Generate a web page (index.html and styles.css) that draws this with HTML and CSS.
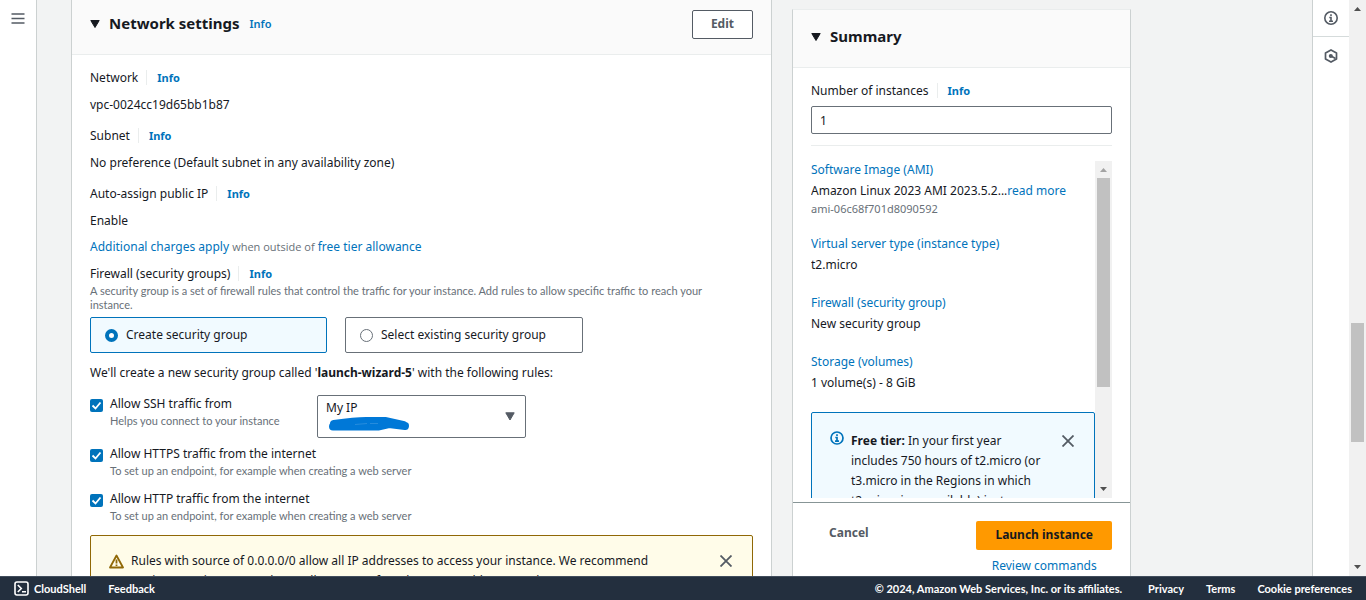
FILE: index.html
```html
<!DOCTYPE html>
<html lang="en">
<head>
<meta charset="utf-8">
<title>Launch an instance | EC2</title>
<link rel="stylesheet" href="styles.css">
</head>
<body>
<div class="app">
  <nav class="rail rail-left">
    <button class="icon-btn" aria-label="Open navigation">
      <svg width="14" height="14" viewBox="0 0 14 14" fill="none" stroke="#545b64" stroke-width="1.600"><path d="M0.500 2h13M0.500 6.500h13M0.500 11h13"/></svg>
    </button>
  </nav>
  <main class="content">
    <section class="card settings">
      <header class="card-head">
        <svg class="caret" width="10" height="8" viewBox="0 0 10 8"><path d="M0.800 0.500h8.400L5 7.500z" fill="#16191f" stroke="#16191f" stroke-linejoin="round"/></svg>
        <h2>Network settings</h2>
        <a class="info" href="#">Info</a>
        <button class="btn btn-edit">Edit</button>
      </header>
      <div class="settings-body">
        <dl class="facts">
          <dt>Network<a class="info ruled" href="#">Info</a></dt>
          <dd>vpc-0024cc19d65bb1b87</dd>
          <dt>Subnet<a class="info ruled" href="#">Info</a></dt>
          <dd>No preference (Default subnet in any availability zone)</dd>
          <dt>Auto-assign public IP<a class="info ruled" href="#">Info</a></dt>
          <dd>Enable</dd>
        </dl>
        <p class="charges"><a href="#">Additional charges apply</a> <small>when outside of</small> <a href="#">free tier allowance</a></p>
        <div class="group-label">Firewall (security groups)<a class="info ruled" href="#">Info</a></div>
        <p class="hint firewall-hint">A security group is a set of firewall rules that control the traffic for your instance. Add rules to allow specific traffic to reach your instance.</p>
        <div class="tiles">
          <label class="tile selected"><input class="radio" type="radio" name="sg" checked>Create security group</label>
          <label class="tile"><input class="radio" type="radio" name="sg">Select existing security group</label>
        </div>
        <p class="group-note">We'll create a new security group called '<b>launch-wizard-5</b>' with the following rules:</p>
        <div class="rules">
          <div class="ssh-row">
            <div class="rule">
              <input class="check" type="checkbox" id="ssh" checked>
              <div><label for="ssh">Allow SSH traffic from</label><p class="hint">Helps you connect to your instance</p></div>
            </div>
            <div class="source">
              <select aria-label="SSH source"><option>My IP</option></select>
              <svg class="scribble" width="84" height="15" viewBox="0 0 84 15"><path d="M7 7Q28 4 39 4H58L76 8" fill="none" stroke="#0078d7" stroke-width="8" stroke-linecap="round" stroke-linejoin="round"/><path d="M6 9.500H51L62 7L78 9" fill="none" stroke="#0078d7" stroke-width="8" stroke-linecap="round" stroke-linejoin="round"/><path d="M28 7.500l12-1M43 6.500h8" stroke="#4da0e3" stroke-width="0.500"/></svg>
              <svg class="source-caret" width="10" height="9" viewBox="0 0 10 9"><path d="M0.800 0.800h8.400L5 8z" fill="#545b64" stroke="#545b64" stroke-linejoin="round"/></svg>
            </div>
          </div>
          <div class="rule">
            <input class="check" type="checkbox" id="https" checked>
            <div><label for="https">Allow HTTPS traffic from the internet</label><p class="hint">To set up an endpoint, for example when creating a web server</p></div>
          </div>
          <div class="rule">
            <input class="check" type="checkbox" id="http" checked>
            <div><label for="http">Allow HTTP traffic from the internet</label><p class="hint">To set up an endpoint, for example when creating a web server</p></div>
          </div>
        </div>
        <div class="alert warning">
          <svg class="alert-icon" width="15" height="15" viewBox="0 0 15 15" fill="none" stroke="#906806" stroke-width="1.800"><path d="M7.500 1.500L14 13.500H1z" stroke-linejoin="round"/><path d="M7.500 5.500v4M7.500 10.500v1.500"/></svg>
          <p>Rules with source of 0.0.0.0/0 allow all IP addresses to access your instance. We recommend setting security group rules to allow access from known IP addresses only.</p>
          <button class="icon-btn close" aria-label="Dismiss"><svg width="12" height="12" viewBox="0 0 12 12" stroke="#545b64" stroke-width="1.800"><path d="M0.500 0.500l11 11M11.500 0.500l-11 11"/></svg></button>
        </div>
      </div>
    </section>
    <aside class="card summary">
      <header class="card-head">
        <svg class="caret" width="10" height="8" viewBox="0 0 10 8"><path d="M0.800 0.500h8.400L5 7.500z" fill="#16191f" stroke="#16191f" stroke-linejoin="round"/></svg>
        <h2>Summary</h2>
      </header>
      <div class="count">
        <div class="group-label"><label for="count">Number of instances</label><a class="info ruled" href="#">Info</a></div>
        <input class="count-input" id="count" type="text" value="1">
      </div>
      <div class="scroller">
        <div class="scroll-content">
          <div class="item"><a href="#">Software Image (AMI)</a><p>Amazon Linux 2023 AMI 2023.5.2...<a href="#">read more</a></p><p class="ami-id">ami-06c68f701d8090592</p></div>
          <div class="item"><a href="#">Virtual server type (instance type)</a><p>t2.micro</p></div>
          <div class="item"><a href="#">Firewall (security group)</a><p>New security group</p></div>
          <div class="item"><a href="#">Storage (volumes)</a><p>1 volume(s) - 8 GiB</p></div>
          <div class="alert free">
            <svg class="alert-icon" width="14" height="14" viewBox="0 0 14 14" fill="none" stroke="#0073bb" stroke-width="1.700"><circle cx="7" cy="7" r="6"/><path d="M7 3.300v1.700M5.300 6.500h1.700v3.500M5 10.200h4"/></svg>
            <p><b>Free tier:</b> In your first year includes 750 hours of t2.micro (or t3.micro in the Regions in which t2.micro is unavailable) instance usage</p>
            <button class="icon-btn close" aria-label="Dismiss"><svg width="12" height="12" viewBox="0 0 12 12" stroke="#545b64" stroke-width="1.800"><path d="M0.500 0.500l11 11M11.500 0.500l-11 11"/></svg></button>
          </div>
        </div>
        <div class="bar">
          <svg width="7" height="4" viewBox="0 0 7 4"><path d="M0 4L3.500 0L7 4z" fill="#a3a3a3"/></svg>
          <div class="track"><div class="thumb"></div></div>
          <svg width="7" height="4" viewBox="0 0 7 4"><path d="M0 0L3.500 4L7 0z" fill="#505050"/></svg>
        </div>
      </div>
      <footer class="actions">
        <button class="btn-link">Cancel</button>
        <div class="launch"><button class="btn-primary">Launch instance</button><a href="#">Review commands</a></div>
      </footer>
    </aside>
  </main>
  <aside class="rail rail-right">
    <button class="icon-btn" aria-label="Info panel"><svg width="14" height="14" viewBox="0 0 14 14" fill="none" stroke="#545b64" stroke-width="1.600"><circle cx="7" cy="7" r="6.200"/><path d="M7 3.300v1.700M5.300 6.500h1.700v3.500M5 10.200h4"/></svg></button>
    <button class="icon-btn" aria-label="Tutorials"><svg width="14" height="14" viewBox="0 0 14 14" fill="none" stroke="#545b64" stroke-width="1.700"><path d="M7 0.900l5.500 3v6.200L7 13.100L1.500 10.100V3.900z" stroke-linejoin="round"/><circle cx="6.800" cy="7" r="1.200" fill="#545b64"/><path d="M7 7l4.500 2.500"/></svg></button>
  </aside>
  <div class="bar page-bar">
    <svg width="7" height="4" viewBox="0 0 7 4"><path d="M0 4L3.500 0L7 4z" fill="#505050"/></svg>
    <div class="track"><div class="thumb"></div></div>
    <svg width="7" height="4" viewBox="0 0 7 4"><path d="M0 0L3.500 4L7 0z" fill="#505050"/></svg>
  </div>
</div>
<footer class="console-footer">
  <a class="shell" href="#"><svg width="15" height="15" viewBox="0 0 15 15" fill="none" stroke="#fff" stroke-width="1.600"><rect x="1" y="1" width="13" height="13" rx="2"/><path d="M3.800 4l3.500 3.500L3.800 11M8 10.800h4"/></svg>CloudShell</a>
  <a href="#">Feedback</a>
  <span class="copyright">© 2024, Amazon Web Services, Inc. or its affiliates.</span>
  <a href="#">Privacy</a>
  <a href="#">Terms</a>
  <a href="#">Cookie preferences</a>
</footer>
</body>
</html>
```
FILE: styles.css
```css
* { box-sizing: border-box; }
body {
  margin: 0;
  height: 100vh;
  display: flex;
  flex-direction: column;
  overflow: hidden;
  background: #f2f3f3;
  color: #16191f;
  font: 12px/20px "Noto Sans", "Open Sans", sans-serif;
}
p, h2, dl, dd { margin: 0; }
a { color: #0073bb; text-decoration: none; }
button, input, select { font: inherit; color: inherit; }
b { font-weight: 700; }

.app { flex: 1; min-height: 0; display: flex; }
.content {
  flex: 1;
  min-width: 0;
  display: grid;
  grid-template-columns: 701fr 339fr;
  grid-template-rows: minmax(0, 1fr);
  gap: 20px;
  padding: 0 181px 0 34px;
  overflow: hidden;
}

.rail { flex: none; width: 37px; background: #fff; display: flex; flex-direction: column; }
.rail-left { border-right: 1px solid #ccd1d1; }
.rail-right { border-left: 1px solid #ccd1d1; }
.icon-btn {
  display: flex;
  align-items: center;
  justify-content: center;
  border: 0;
  padding: 0;
  background: none;
}
.rail .icon-btn { height: 37px; }
.rail-right .icon-btn:first-child { border-bottom: 1px solid #d5dbdb; }

.card { background: #fff; border: 1px solid #ccd1d1; border-width: 0 1px; min-width: 0; }
.card-head {
  display: flex;
  align-items: center;
  height: 55px;
  padding: 0 18px 6px;
  background: #fafafa;
  border-bottom: 1px solid #eaeded;
}
.card-head h2 { font-size: 15px; line-height: 20px; font-weight: 700; margin: 0 10px 2px 9px; }
.info { font-size: 11px; font-weight: 700; }
.card-head .info { font-weight: 600; }
.ruled { margin-left: 8px; padding: 0 0 0 10px; border-left: 1px solid #eaeded; line-height: 14px; }
.btn {
  height: 29px;
  padding: 0 18px;
  border: 1px solid #545b64;
  border-radius: 2px;
  background: #fff;
  color: #545b64;
  font-weight: 700;
  line-height: 20px;
}
.btn-edit { margin-left: auto; }

.settings-body { padding: 13px 18px; }
.facts dt { margin-bottom: 7px; }
.facts dd { margin-bottom: 11px; }
.facts dd:last-child { margin-bottom: 6px; }
.charges { margin-bottom: 7px; color: #687078; }
.charges small { font: 11px "Open Sans", sans-serif; }
.hint { font: 11px/14px Lato, "Open Sans", sans-serif; color: #687078; }
.firewall-hint { margin-bottom: 5px; padding-right: 20px; }
.tiles { display: grid; grid-template-columns: 237px 238px; gap: 18px; margin-bottom: 10px; }
.tile {
  display: flex;
  align-items: center;
  gap: 8px;
  height: 36px;
  padding: 0 14px;
  border: 1px solid #687078;
  border-radius: 2px;
}
.tile.selected { border-color: #0073bb; background: #f1faff; }
.radio {
  appearance: none;
  width: 13px;
  height: 13px;
  margin: 0;
  border: 1px solid #687078;
  border-radius: 50%;
  background: #fff;
}
.radio:checked { border: 4px solid #0073bb; }
.group-note { margin-bottom: 11px; }
.rules { display: flex; flex-direction: column; gap: 11px; margin-bottom: 12px; }
.rule { display: flex; gap: 7px; align-items: flex-start; }
.rule label { display: block; }
.check {
  appearance: none;
  flex: none;
  width: 13px;
  height: 13px;
  margin: 5px 0 0;
  border-radius: 2px;
  background: #0073bb url("data:image/svg+xml,%3Csvg xmlns='http://www.w3.org/2000/svg' viewBox='0 0 13 13'%3E%3Cpath d='M2.500 6.500L5.500 9.500L10.500 3.500' fill='none' stroke='white' stroke-width='1.800'/%3E%3C/svg%3E");
}
.ssh-row { display: grid; grid-template-columns: 209px 209px; gap: 18px; height: 39px; }
.source { position: relative; height: 43px; margin-top: 1px; }
.source select {
  appearance: none;
  width: 100%;
  height: 100%;
  padding: 0 8px 17px;
  border: 1px solid #687078;
  border-radius: 2px;
  background: #fff;
}
.scribble { position: absolute; left: 10px; top: 22px; }
.source-caret { position: absolute; right: 11px; top: 17px; }

.alert { display: flex; align-items: flex-start; border: 1px solid; border-radius: 2px; padding: 15px 20px 15px 18px; }
.alert p { flex: 1; min-width: 0; }
.alert-icon { flex: none; margin: 3px 7px 0 0; }
.warning { border-color: #906806; background: #fffce9; }
.warning p { padding-right: 50px; }
.close { width: 12px; height: 20px; flex: none; }

.summary { margin-top: 9px; border-top-width: 1px; border-top-color: #eaeded; display: flex; flex-direction: column; min-height: 0; }
.summary .card-head { flex: none; height: 58px; padding-bottom: 4px; }
.count { flex: none; margin: 0 18px; padding: 13px 0 11px; border-bottom: 1px solid #eaeded; }
.count-input {
  display: block;
  width: 100%;
  height: 28px;
  margin-top: 5px;
  padding: 0 8px;
  border: 1px solid #687078;
  border-radius: 2px;
  background: #fff;
}
.scroller { flex: 1; min-height: 0; display: flex; margin: 15px 18px 4px; overflow: hidden; }
.scroll-content { flex: 1; min-width: 0; overflow: hidden; }
.item { margin-bottom: 18px; }
.item > a { display: block; line-height: 18px; }
.item p { line-height: 23px; white-space: nowrap; }
.item .ami-id { font-size: 11px; line-height: 14px; padding-bottom: 1px; color: #687078; }
.free { border-color: #0073bb; background: #f1faff; padding-top: 18px; }
.free .alert-icon { margin: 0 7px 0 0; }
.free p { padding-right: 14px; }
.bar { flex: none; width: 17px; background: #f1f1f1; display: flex; flex-direction: column; align-items: center; justify-content: space-between; padding: 7px 0; }
.track { flex: 1; align-self: stretch; margin: 6px 2px; }
.thumb { height: 69%; background: #c1c1c1; }
.page-bar .thumb { height: 22%; margin-top: 306px; }

.actions { flex: none; display: flex; justify-content: space-between; align-items: flex-start; height: 74px; padding: 18px 18px 0; border-top: 1px solid #879596; overflow: hidden; }
.btn-link { border: 0; background: none; color: #545b64; font-weight: 700; padding: 2px 18px; }
.launch { display: flex; flex-direction: column; align-items: center; gap: 6px; }
.btn-primary { height: 29px; padding: 0 19px 2px; border: 0; border-radius: 2px; background: #f90; font-weight: 700; color: #16191f; }

.console-footer {
  flex: none;
  display: flex;
  align-items: center;
  height: 24px;
  padding: 0 14px;
  gap: 22px;
  background: #232f3e;
  border-top: 1px solid #414d5c;
  color: #fff;
  font: 700 11px/20px Lato, "Open Sans", sans-serif;
}
.console-footer a { color: #fff; }
.shell { display: flex; align-items: center; gap: 5px; }
.copyright { margin-left: auto; margin-right: 4px; }
```
